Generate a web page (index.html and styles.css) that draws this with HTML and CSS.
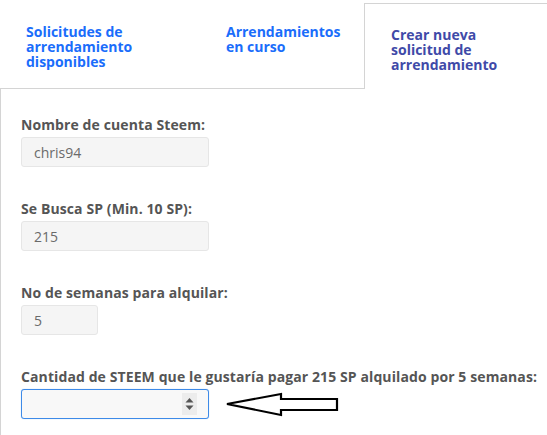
FILE: index.html
```html
<!DOCTYPE html>
<html lang="es">
<head>
    <meta charset="UTF-8">
    <meta name="viewport" content="width=device-width, initial-scale=1.0">
    <title>Crear nueva solicitud de arrendamiento</title>
    <link rel="stylesheet" href="styles.css">
</head>
<body>
    <div class="tabs">
        <a class="tab tab-first" href="#">Solicitudes de arrendamiento disponibles</a>
        <a class="tab tab-second" href="#">Arrendamientos en curso</a>
        <a class="tab tab-active" href="#">Crear nueva solicitud de arrendamiento</a>
    </div>

    <div class="panel">
        <div class="field">
            <label>Nombre de cuenta Steem:</label>
            <input class="box" type="text" value="chris94" readonly>
        </div>

        <div class="field">
            <label>Se Busca SP (Min. 10 SP):</label>
            <input class="box" type="text" value="215" readonly>
        </div>

        <div class="field">
            <label>No de semanas para alquilar:</label>
            <input class="box box-small" type="text" value="5" readonly>
        </div>

        <div class="field">
            <label>Cantidad de STEEM que le gustaría pagar 215 SP alquilado por 5 semanas:</label>
            <div class="row">
                <div class="box box-focus">
                    <span class="spin">
                        <svg width="9" height="16" viewBox="0 0 9 16">
                            <path d="M4.5 2 L8.5 6.5 L0.5 6.5 Z" fill="#555"/>
                            <path d="M0.5 9.5 L8.5 9.5 L4.5 14 Z" fill="#555"/>
                        </svg>
                    </span>
                </div>
                <!-- the hand-drawn arrow pointing at the empty field -->
                <svg class="arrow" width="116" height="26" viewBox="0 0 116 26">
                    <path d="M2 13 L56 3 L56 8 L112 8 L112 19 L56 19 L56 24 Z" fill="none" stroke="#000" stroke-width="2.2" stroke-linejoin="miter"/>
                </svg>
            </div>
        </div>
    </div>
</body>
</html>
```

FILE: styles.css
```css
body {
    margin: 0;
    font-family: "Open Sans", "Noto Sans", sans-serif;
    background: #fff;
    color: #555;
    width: 547px;
    height: 435px;
    overflow: hidden;
}
.tabs {
    display: flex;
    height: 89px;
}
.tab {
    display: block;
    box-sizing: border-box;
    text-decoration: none;
    font-size: 14px;
    font-weight: 700;
    line-height: 15px;
    padding: 24px 25px 0 26px;
    color: #1a6dfb;
    border-bottom: 1px solid #d4d4d4;
}
.tab-first {
    width: 200px;
}
.tab-second {
    width: 164px;
}
.tab-active {
    flex: 1;
    margin-top: 3px;
    padding-top: 23px;
    color: #3f4aa8;
    border: 1px solid #d4d4d4;
    border-bottom: none;
    margin-right: -2px;
}
.panel {
    border-left: 1px solid #d4d4d4;
    padding: 26px 0 0 20px;
    height: 320px;
}
.field {
    margin-bottom: 32px;
}
.field label {
    display: block;
    font-size: 14px;
    font-weight: 700;
    line-height: 20px;
    letter-spacing: 0.1px;
    margin-bottom: 2px;
    color: #555;
}
.box {
    display: block;
    box-sizing: border-box;
    width: 188px;
    height: 30px;
    padding: 0 12px;
    font-family: "Open Sans", sans-serif;
    font-size: 14px;
    color: #6a6a6a;
    background: #f5f5f5;
    border: 1px solid #e6e6e6;
    border-radius: 3px;
    outline: none;
}
.box-small {
    width: 77px;
}
.row {
    display: flex;
    align-items: center;
}
.box-focus {
    display: flex;
    justify-content: flex-end;
    align-items: center;
    padding: 0 11px 0 0;
    background: #f8f8f8;
    border: 1.5px solid #3d8ae8;
    box-shadow: 0 0 1px #8fbcf0;
}
.spin {
    display: flex;
    align-items: center;
    justify-content: center;
    width: 15px;
    height: 22px;
    background: #ececec;
}
.arrow {
    margin-left: 16px;
}
```
